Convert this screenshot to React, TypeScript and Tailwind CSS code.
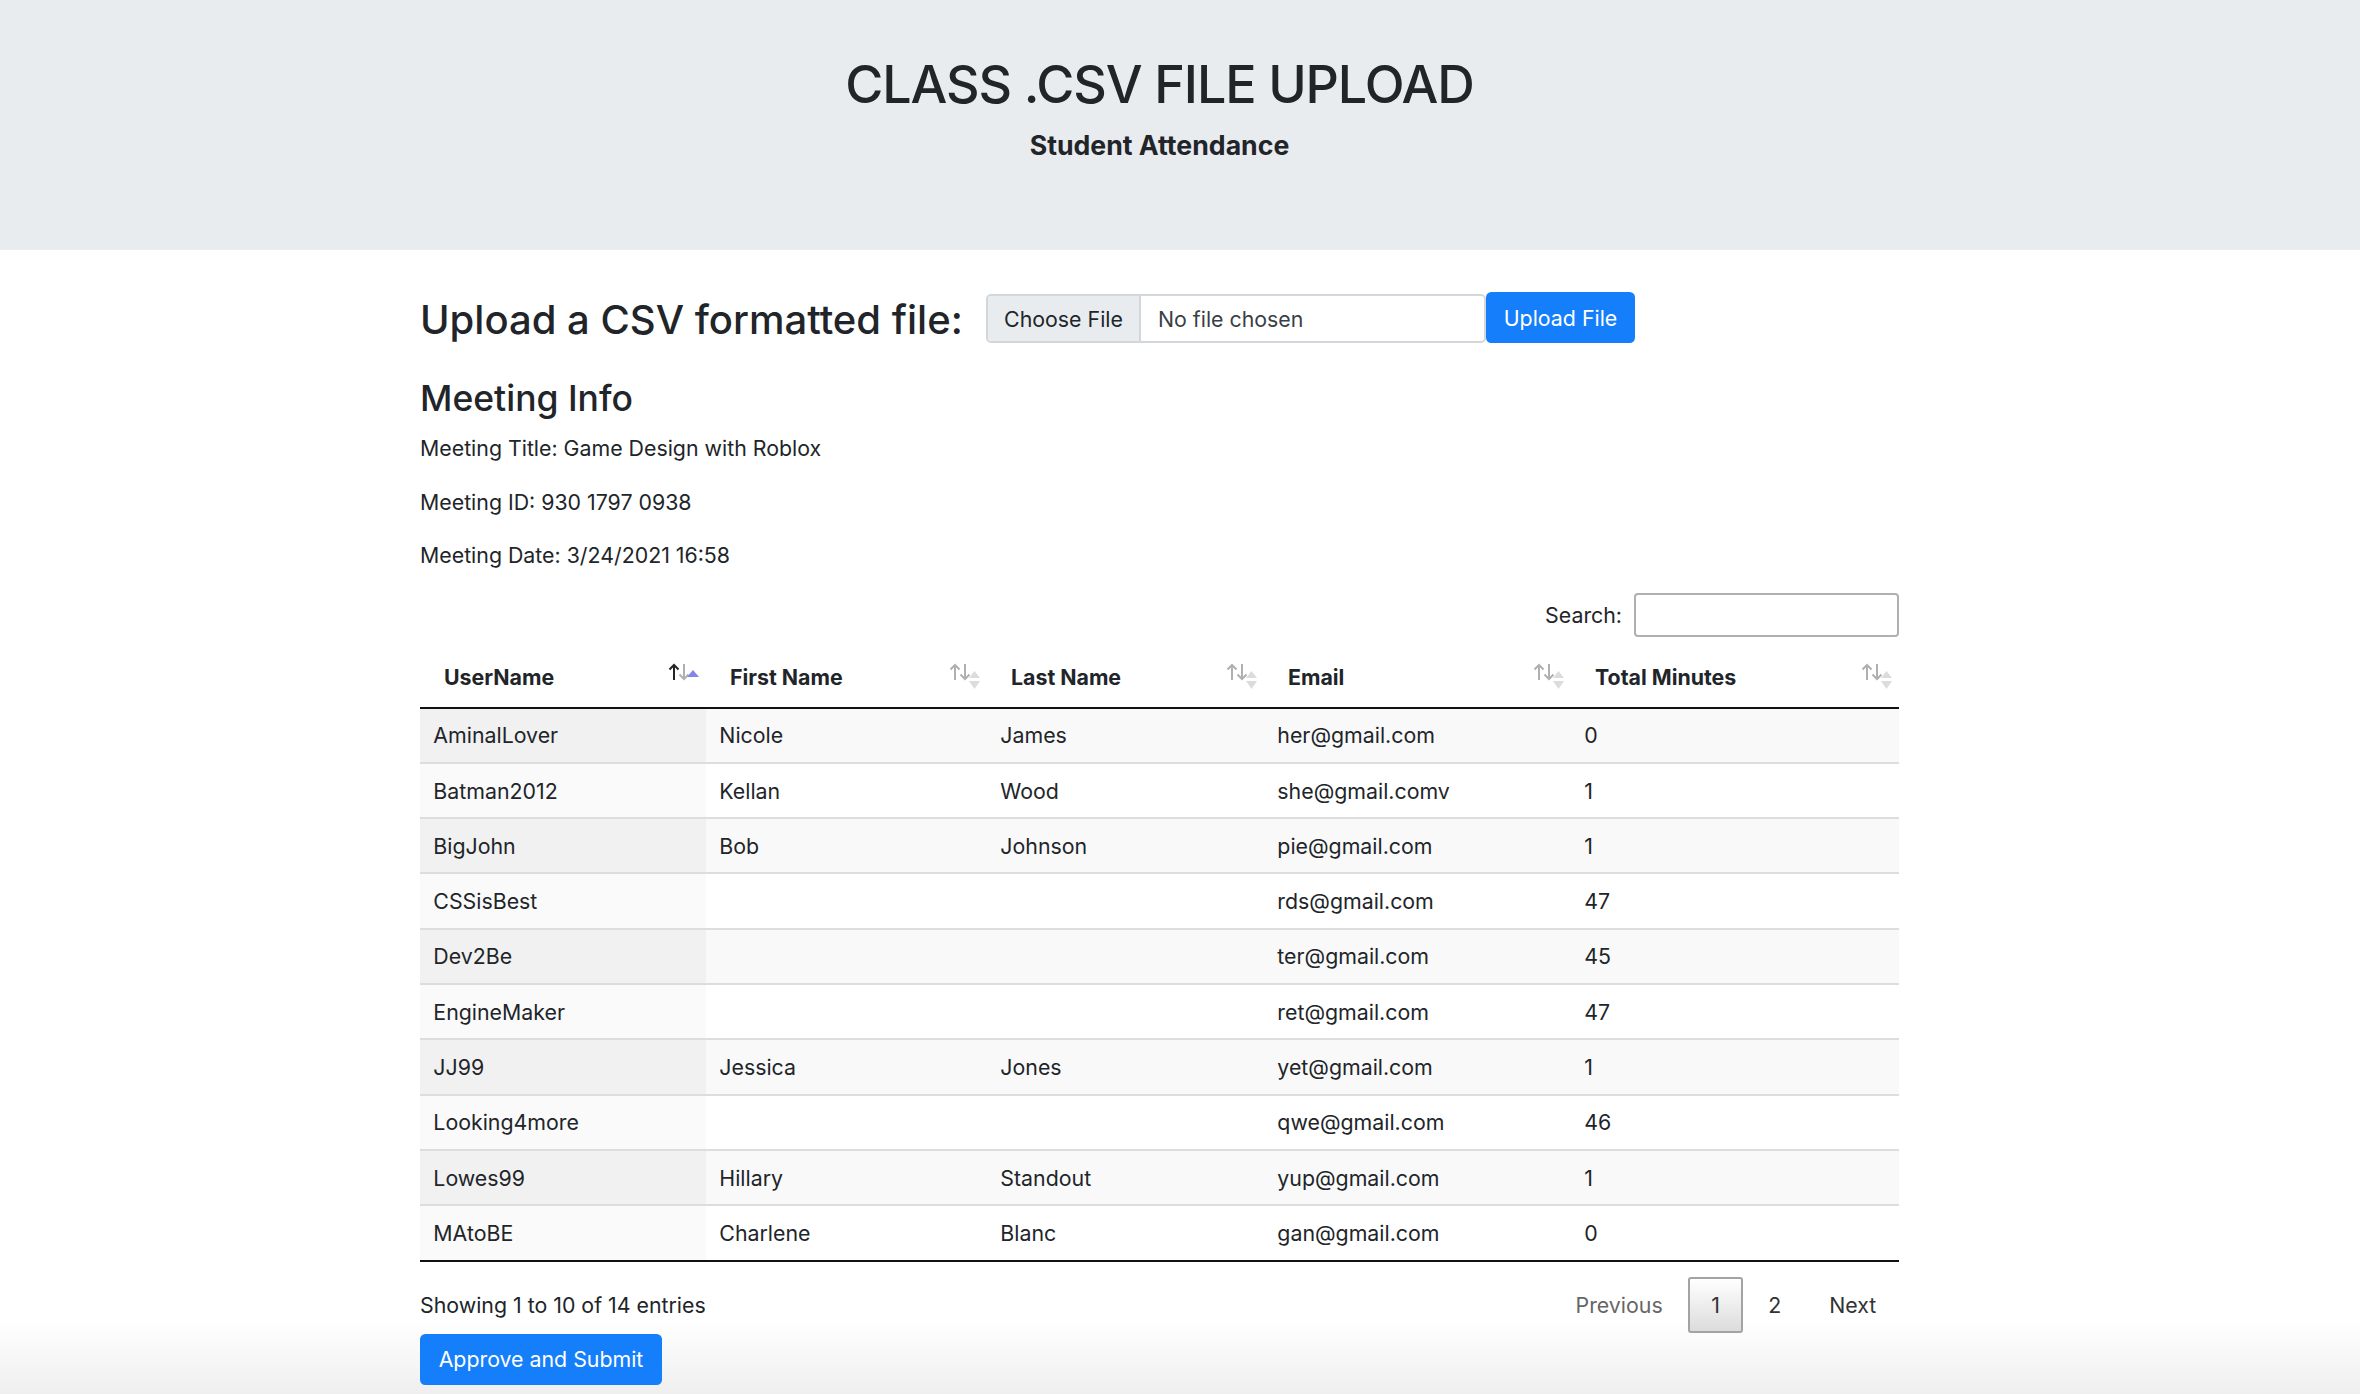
import React from "react";

const ROWS: string[][] = [
  ["AminalLover", "Nicole", "James", "her@gmail.com", "0"],
  ["Batman2012", "Kellan", "Wood", "she@gmail.comv", "1"],
  ["BigJohn", "Bob", "Johnson", "pie@gmail.com", "1"],
  ["CSSisBest", "", "", "rds@gmail.com", "47"],
  ["Dev2Be", "", "", "ter@gmail.com", "45"],
  ["EngineMaker", "", "", "ret@gmail.com", "47"],
  ["JJ99", "Jessica", "Jones", "yet@gmail.com", "1"],
  ["Looking4more", "", "", "qwe@gmail.com", "46"],
  ["Lowes99", "Hillary", "Standout", "yup@gmail.com", "1"],
  ["MAtoBE", "Charlene", "Blanc", "gan@gmail.com", "0"],
];

const COLUMNS = ["UserName", "First Name", "Last Name", "Email", "Total Minutes"];
const GRID = "grid grid-cols-[286px_281px_277px_307px_328px]";

function SortIcon({ active }: { active?: boolean }) {
  return (
    <svg width="33" height="30" viewBox="0 0 33 30" className="absolute right-[6px] top-[14px]">
      <path
        d="M7 18V3M2.5 7.5L7 3l4.5 4.5"
        stroke={active ? "#212529" : "#b0b0b0"}
        strokeWidth="2"
        fill="none"
      />
      <path d="M17 2v15M12.5 12.5L17 17l4.5-4.5" stroke="#b0b0b0" strokeWidth="2" fill="none" />
      {active ? (
        <polygon points="20,15 26,8 32,15" fill="#8585e6" />
      ) : (
        <>
          <polygon points="21,16 26.5,9 32,16" fill="#dcdcdc" />
          <polygon points="21,19 32,19 26.5,27" fill="#dcdcdc" />
        </>
      )}
    </svg>
  );
}

export default function App() {
  return (
    <div className="h-[1394px] overflow-hidden bg-[linear-gradient(to_bottom,#ffffff_1320px,#efefef_1394px)] text-[#212529] [font-family:Inter,'Noto_Sans',sans-serif]">
      <header className="h-[250px] bg-[#e9ecef] pt-[53px]">
        <div className="ml-[420px] w-[1479px] text-center">
          <h1 className="text-[52px] leading-[64px] font-medium tracking-[-1.1px]">CLASS .CSV FILE UPLOAD</h1>
          <p className="mt-[11.7px] text-[26.67px] leading-[32px] font-bold">Student Attendance</p>
        </div>
      </header>

      <main className="ml-[420px] w-[1479px] pt-[42px] text-[21.33px] leading-[32px]">
        {/* upload form */}
        <div className="flex items-start h-[51px]">
          <h3 className="w-[566px] mt-[3.5px] text-[40px] leading-[48px] font-medium whitespace-nowrap">
            Upload a CSV formatted file:
          </h3>
          <div className="mt-[2px] flex h-[49px] w-[500px] overflow-hidden rounded-[5px] border-2 border-[#d3d7db] bg-white">
            <div className="flex w-[153px] items-center justify-center border-r-2 border-[#d3d7db] bg-[#e9ecef]">
              Choose File
            </div>
            <div className="flex items-center pl-[17px] text-[#3a3f44]">No file chosen</div>
          </div>
          <button className="flex h-[51px] w-[149px] items-center justify-center rounded-[5.33px] bg-[#147efb] text-white">
            Upload File
          </button>
        </div>

        {/* meeting info */}
        <h4 className="mt-[34.8px] text-[35.5px] leading-[42.6px] font-medium">Meeting Info</h4>
        <p className="mt-[11.85px]">Meeting Title: Game Design with Roblox</p>
        <p className="mt-[21.33px]">Meeting ID: 930 1797 0938</p>
        <p className="mt-[21.33px]">Meeting Date: 3/24/2021 16:58</p>

        {/* search */}
        <div className="mt-[22px] flex h-[44px] items-center justify-end">
          <span>Search:</span>
          <div className="ml-[12px] h-[44px] w-[265px] rounded-[4px] border-2 border-[#b0b0b0] bg-white" />
        </div>

        {/* table */}
        <div className="mt-[11px]">
          <div className={`${GRID} border-b-2 border-[#111111]`}>
            {COLUMNS.map((c, i) => (
              <div key={c} className="relative pl-[24px] pr-[40px] py-[13.33px] font-bold">
                {c}
                <SortIcon active={i === 0} />
              </div>
            ))}
          </div>
          {ROWS.map((r, ri) => {
            const odd = ri % 2 === 0;
            return (
              <div
                key={r[0]}
                className={`${GRID} ${ri > 0 ? "border-t-2 border-[#dddddd]" : ""} ${odd ? "bg-[#f9f9f9]" : "bg-white"}`}
              >
                {r.map((cell, ci) => (
                  <div
                    key={ci}
                    className={`px-[13.33px] py-[10.67px] whitespace-nowrap ${
                      ci === 0 ? (odd ? "bg-[#f1f1f1]" : "bg-[#fafafa]") : ""
                    }`}
                  >
                    {cell}
                  </div>
                ))}
              </div>
            );
          })}
          <div className="h-[2px] bg-[#111111]" />
        </div>

        {/* footer */}
        <div className="flex h-[72px] items-start justify-between">
          <div className="pt-[27px]">Showing 1 to 10 of 14 entries</div>
          <div className="flex items-center pt-[15px]">
            <span className="flex h-[56px] items-center px-[22.67px] text-[#666666]">Previous</span>
            <span className="ml-[2.67px] flex h-[56px] min-w-[55px] items-center justify-center rounded-[3px] border-2 border-[#a3a3a3] bg-[linear-gradient(to_bottom,#ffffff,#dcdcdc)] px-[20px] text-[#333333]">
              1
            </span>
            <span className="ml-[2.67px] flex h-[56px] items-center px-[22.67px] text-[#333333]">2</span>
            <span className="ml-[2.67px] flex h-[56px] items-center px-[22.67px] text-[#333333]">Next</span>
          </div>
        </div>

        <button className="flex h-[51px] w-[242px] items-center justify-center rounded-[5.33px] bg-[#147efb] text-white">
          Approve and Submit
        </button>
      </main>
    </div>
  );
}
